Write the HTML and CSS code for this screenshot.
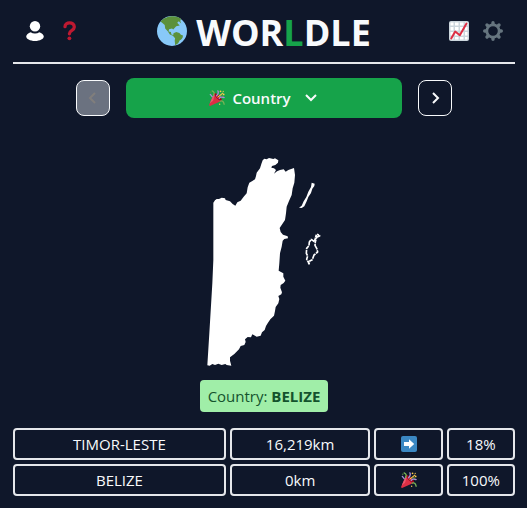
FILE: index.html
```html
<!DOCTYPE html>
<html lang="en">
<head>
<meta charset="utf-8">
<meta name="viewport" content="width=device-width, initial-scale=1">
<title>Worldle</title>
<link rel="stylesheet" href="styles.css">
</head>
<body>
<svg class="sprite" aria-hidden="true">
  <symbol id="party" viewBox="0 0 36 36">
    <path fill="#dd2e44" d="M11.6 7.6c-.1.1-.2.3-.3.5L.1 33.500c-.3.9.9 2.400 2.300 2.300l25.400-11.200c.4-.2.6-.3.600-.6 1.200-2-1.700-6.600-6.300-11.200S13 6.200 11.600 7.600z"/>
    <path fill="#ea596e" d="M13 12 11.400 8.100 1.600 30.200 9 24z"/>
    <path fill="#a0041e" d="M23 13c4.500 4.500 7 9.400 5.500 10.900-1.500 1.500-6.400-1-10.900-5.500S10.600 9 12.100 7.500s6.400 1 10.900 5.500z"/>
    <path fill="none" stroke="#aa8dd8" stroke-width="3" stroke-linecap="round" d="M17 13c3-3 5-7 3-11M23 19c2-4 7-4 11-2M3 10l4 5"/>
    <path fill="none" stroke="#77b255" stroke-width="3" stroke-linecap="round" d="M7 2c5 2 6 6 3 10M25 25c6-2 8 2 9 7"/>
    <path fill="none" stroke="#ffcc4d" stroke-width="2.500" stroke-linecap="round" d="M20 16 31 7"/>
    <g fill="#ffcc4d"><circle cx="26" cy="3" r="2"/><circle cx="33" cy="10" r="2"/><circle cx="24" cy="32" r="1.500"/><circle cx="32" cy="3" r="1.500"/></g>
    <g fill="#5c913b"><circle cx="29" cy="13" r="2"/><circle cx="4" cy="5" r="1.500"/></g>
  </symbol>
</svg>
<div class="page">
  <header class="header">
    <div class="tools">
      <button class="icon-button" aria-label="Profile">
        <svg width="20" height="22" viewBox="0 0 20 22"><path fill="#fff" d="M5.700 12.200C3.300 13 1.200 14.700 1.200 16.500 1.200 18.800 5 21 10 21s8.800-2.200 8.800-4.500c0-1.800-2.100-3.500-4.500-4.300A7 7 0 0 1 10 13.500a7 7 0 0 1-4.300-1.300z"/><circle cx="10" cy="6.300" r="5.200" fill="#fff"/></svg>
      </button>
      <button class="icon-button" aria-label="Help">
        <svg width="18" height="22" viewBox="0 0 18 22"><path fill="none" stroke="#be1931" stroke-width="3.300" stroke-linecap="round" stroke-linejoin="round" d="M5 6.700C5 1.500 14.300 1.500 14.300 7c0 3.600-4.900 3-4.900 6.800"/><circle cx="9.400" cy="18.300" r="1.900" fill="#be1931"/></svg>
      </button>
    </div>
    <h1 class="title">
      <svg class="globe" width="30" height="30" viewBox="0 0 30 30" aria-hidden="true"><circle cx="15" cy="15" r="15" fill="#88c9f9"/><path fill="#5c913b" d="M3.500 5.500C7 1.500 12 .2 16 .2c3 .1 6 1 8 2.500l-.7 2.200.9 2.600-2.400-2.200-1.600 1.500 2.500 2.700-3.500.8-3 3.300-1.200-1.200-3 .8-.4 2.300 2.300.4.500 2.500 2.800.8-.8.800-3.500-1.500-2.200-3.200-2.500-2.700-.5-3.600-2-1.800z"/><path fill="#5c913b" d="m16.500 17.300 2.800-1.200 3.100 1 1.500 1.600 2.100.7c-.2 3-1.800 4.100-3.200 4.900l-1.600 3-3 2-.5-4.800.4-2.200-2-2.200z"/></svg>
      <span>WOR<span class="accent">L</span>DLE</span>
    </h1>
    <div class="tools">
      <button class="icon-button" aria-label="Statistics">
        <svg width="20" height="20" viewBox="0 0 20 20"><rect width="20" height="20" rx="2" fill="#ccd6dd"/><path fill="#fff" d="M1.500 1.500h3v3h-3zm4.500 0h3.500v3H6zm5 0h3.500v3H11zm5 0h2.500v3H16zM1.500 6h3v3.500h-3zM6 6h3.500v3.500H6zm5 0h3.500v3.500H11zm5 0h2.500v3.500H16zM1.500 11h3v3.500h-3zM6 11h3.500v3.500H6zm5 0h3.500v3.500H11zm5 0h2.500v3.500H16zM1.500 16h3v2.500h-3zM6 16h3.500v2.500H6zm5 0h3.500v2.500H11zm5 0h2.500v2.500H16z"/><path fill="none" stroke="#dd2e44" stroke-width="2" stroke-linecap="round" stroke-linejoin="round" d="m2.200 17.500 4-7 4.600 3.800L17.500 2.500"/></svg>
      </button>
      <button class="icon-button" aria-label="Settings">
        <svg width="20" height="20" viewBox="0 0 20 20"><circle cx="10" cy="10" r="6.200" fill="none" stroke="#66757f" stroke-width="2.800"/><path stroke="#66757f" stroke-width="3.400" stroke-linecap="round" d="M10 1.700V3m0 14v1.300M1.700 10H3m14 0h1.300M4 4l1 1m10 10 1 1M4 16l1-1M15 5l1-1"/></svg>
      </button>
    </div>
  </header>

  <main>
    <nav class="rounds" aria-label="Rounds">
      <button class="step" disabled aria-label="Previous round"><svg width="16" height="16" viewBox="0 0 16 16"><path d="m10 3-5 5 5 5"/></svg></button>
      <button class="round">
        <svg class="party" width="16" height="16" aria-hidden="true"><use href="#party"/></svg>
        <span>Country</span>
        <svg class="chevron" width="16" height="16" viewBox="0 0 16 16" aria-hidden="true"><path d="m3 5 5 5 5-5"/></svg>
      </button>
      <button class="step" aria-label="Next round"><svg width="16" height="16" viewBox="0 0 16 16"><path d="m6 3 5 5-5 5"/></svg></button>
    </nav>

    <svg class="map" width="116" height="210" viewBox="33 21 348 630" role="img" aria-label="Country outline">
      <path fill="#fff" d="M55 158 60 151 65 147 72 147 80 143 90 145 92 150 105 154 113 162 121 167 127 157 137 152 146 140 155 130 158 112 163 98 172 93 180 88 183 78 185 68 195 55 199 42 203 31 208 26 215 28 222 24 235 27 240 25 250 31 249 38 241 45 231 48 229 53 237 55 243 60 237 71 246 64 255 60 266 58 272 65 280 60 297 54 300 75 298 98 293 115 290 135 282 153 275 170 273 190 270 210 262 222 254 234 257 246 264 254 278 259 279 265 268 267 263 272 260 290 255 310 253 340 251 362 258 366 265 370 265 380 271 392 266 399 257 405 256 413 261 427 259 433 250 438 253 447 250 460 242 471 240 483 237 497 226 508 218 520 213 528 209 540 201 547 197 557 185 560 180 557 172 553 168 562 158 561 150 568 152 576 148 585 137 588 132 598 118 612 105 622 105 632 109 647 95 645 91 642 80 645 70 641 60 645 52 642 44 647 37 646 43 550 49 450 52 400 55 330z"/>
      <path fill="#fff" d="m350 98 9 3-1 7-6 8-4 13-8 12-5 13-7 15-8 5-8-1 8-6 6-13 8-13 6-16 8-14z"/>
      <path fill="none" stroke="#fff" stroke-width="5" stroke-dasharray="12 2 18 2" stroke-linejoin="bevel" d="m358 275-9-7-6 8-1 11-7 8-1 15 4 8-3 10 5 8 2 7 2-10 8-4 5-14 11-9-3-11-5-9 1-11 4-13 10-5-9-4m-8 22 3-10 3-11"/>
    </svg>

    <p class="answer">Country: <strong>BELIZE</strong></p>

    <table class="guesses" aria-label="Guesses">
      <tbody>
        <tr><td>TIMOR-LESTE</td><td>16,219km</td><td><svg width="16" height="16" viewBox="0 0 16 16" role="img" aria-label="East"><rect width="16" height="16" rx="2" fill="#3b88c3"/><path fill="#fff" d="M8 3.200 13.200 8 8 12.800V10H3V6h5z"/></svg></td><td>18%</td></tr>
        <tr><td>BELIZE</td><td>0km</td><td><svg width="16" height="16" role="img" aria-label="Correct"><use href="#party"/></svg></td><td>100%</td></tr>
      </tbody>
    </table>
  </main>
</div>
</body>
</html>
```
FILE: styles.css
```css
* {
  box-sizing: border-box;
}

body {
  margin: 0;
  min-height: 100vh;
  background: #0f172a;
  color: #f8fafc;
  font: 15px/24px "Open Sans", "Noto Sans", sans-serif;
}

button {
  padding: 0;
  border: 0;
  background: none;
  color: inherit;
  font: inherit;
  cursor: pointer;
}

svg {
  display: block;
  flex: none;
}

.sprite {
  position: absolute;
  width: 0;
  height: 0;
}

.page {
  max-width: 560px;
  margin: 0 auto;
  padding: 0 12px 12px 13px;
}

.header {
  display: flex;
  align-items: center;
  justify-content: space-between;
  height: 64px;
  border-bottom: 2px solid #e5e7eb;
}

.tools {
  display: flex;
  padding: 0 5px;
}

.icon-button {
  display: grid;
  place-items: center;
  width: 34px;
  height: 40px;
}

.title {
  display: flex;
  align-items: center;
  gap: 9px;
  margin: 0;
  padding-top: 4px;
  font-size: 36px;
  line-height: 40px;
  font-weight: 700;
}

.globe {
  margin-bottom: 4px;
}

.accent {
  color: #16a34a;
}

.rounds {
  display: flex;
  align-items: center;
  gap: 16px;
  width: 75%;
  margin: 14px auto 0;
}

.step {
  display: grid;
  place-items: center;
  width: 34px;
  height: 36px;
  border: 1px solid #f8fafc;
  border-radius: 8px;
}

.step:disabled {
  background: #6b7280;
  color: #807e7c;
  cursor: default;
}

.step path,
.chevron path {
  fill: none;
  stroke: currentColor;
  stroke-width: 2;
}

.round {
  display: flex;
  flex: 1;
  align-items: center;
  justify-content: center;
  gap: 7px;
  height: 40px;
  border-radius: 8px;
  background: #16a34a;
  font-weight: 600;
}

.chevron {
  margin-left: 5px;
}

.map {
  margin: 39px auto 13px;
}

.answer {
  width: fit-content;
  margin: 0 auto 16px;
  padding: 4px 8px;
  border-radius: 4px;
  background: #a0eea8;
  color: #14532d;
}

.guesses,
.guesses tbody {
  display: grid;
  gap: 4px;
}

.guesses tr {
  display: grid;
  grid-template-columns: repeat(7, 1fr);
  gap: 4px;
}

.guesses td {
  display: flex;
  align-items: center;
  justify-content: center;
  height: 32px;
  padding: 0;
  border: 2px solid #e5e7eb;
  border-radius: 4px;
}

.guesses td:nth-child(1) {
  grid-column: span 3;
}

.guesses td:nth-child(2) {
  grid-column: span 2;
}
```
